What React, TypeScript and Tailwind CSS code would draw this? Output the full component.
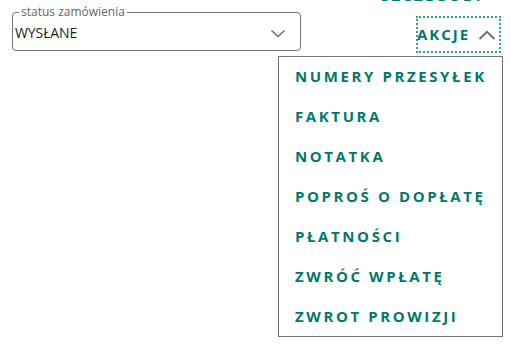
import React from "react";

const items = [
  "NUMERY PRZESYŁEK",
  "FAKTURA",
  "NOTATKA",
  "POPROŚ O DOPŁATĘ",
  "PŁATNOŚCI",
  "ZWRÓĆ WPŁATĘ",
  "ZWROT PROWIZJI",
];

export default function App() {
  return (
    <div className="relative w-[511px] h-[363px] overflow-hidden bg-white font-['Open_Sans',sans-serif]">
      <div className="flex items-start pl-[12px] pr-[10px]">
        <fieldset className="mt-[5px] w-[289px] h-[46px] border border-[#757575] rounded-[4px] px-[2px] pb-0 m-0">
          <legend className="ml-[4px] px-[2px] text-[12px] leading-[14px] text-[#666]">status zamówienia</legend>
          <div className="flex items-center justify-between h-[29px] pb-[2px]">
            <span className="text-[14px] text-[#222] tracking-[-0.1px]">WYSŁANE</span>
            <svg width="16" height="10" viewBox="0 0 16 10" className="mr-[12px] mt-[2px]">
              <path d="M1.5 1.5 L8 7.5 L14.5 1.5" fill="none" stroke="#6b6b6b" strokeWidth="1.4" />
            </svg>
          </div>
        </fieldset>
        <div className="ml-auto flex flex-col items-end">
          <div className="mt-[-16px] mr-[16px] text-[15px] font-bold tracking-[2.2px] text-[#00796b] leading-[22px]">SZCZEGÓŁY</div>
          <button className="mt-[10px] w-[85px] h-[37px] border-2 border-dotted border-[#26a69a] flex items-center pl-[0px] pr-[3px] justify-between">
            <span className="ml-[-1px] text-[15px] font-bold tracking-[2px] text-[#00796b]">AKCJE</span>
            <svg width="18" height="10" viewBox="0 0 18 10">
              <path d="M1.5 9 L9 1.8 L16.5 9" fill="none" stroke="#6b6b6b" strokeWidth="1.8" />
            </svg>
          </button>
        </div>
      </div>
      <div className="absolute left-[278px] top-[56px] w-[225px] h-[281px] border border-[#757575] bg-white">
        <ul className="mt-[-1px]">
          {items.map((t) => (
            <li key={t} className="h-[40px] flex items-center pl-[16px] text-[15px] font-bold tracking-[2.6px] text-[#00796b]">
              {t}
            </li>
          ))}
        </ul>
      </div>
    </div>
  );
}
